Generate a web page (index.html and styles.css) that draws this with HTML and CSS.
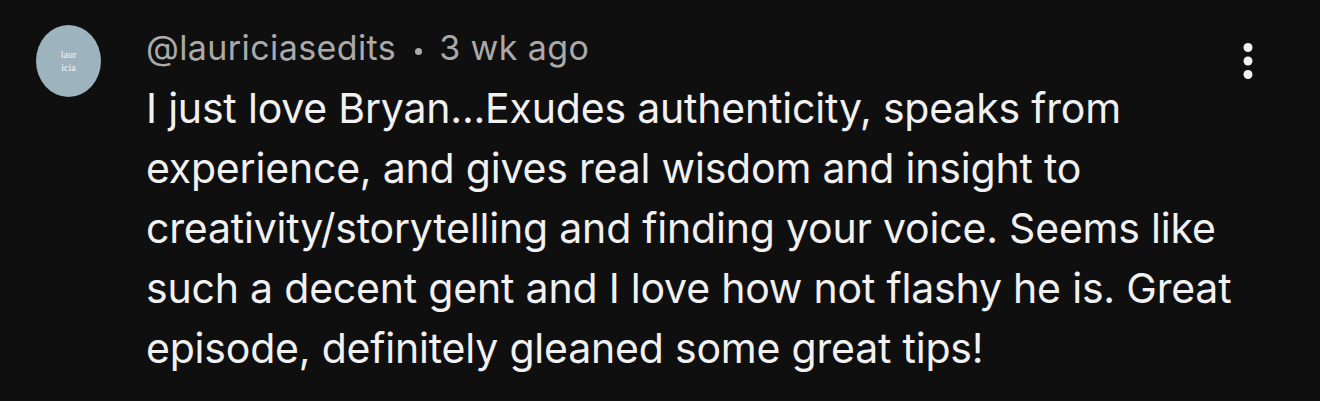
FILE: index.html
```html
<!DOCTYPE html>
<html>
<head>
<meta charset="utf-8">
<link rel="stylesheet" href="styles.css">
</head>
<body>
<div class="comment">
  <div class="avatar"><span>laur<br>icia</span></div>
  <div class="content">
    <div class="meta">@lauriciasedits<span class="dot"></span>3 wk ago</div>
    <p class="text">I just love Bryan...Exudes authenticity, speaks from<br>experience, and gives real wisdom and insight to<br>creativity/storytelling and finding your voice. Seems like<br>such a decent gent and I love how not flashy he is. Great<br>episode, definitely gleaned some great tips!</p>
  </div>
  <button class="menu" aria-label="More">
    <svg width="12" height="40" viewBox="0 0 12 40"><circle cx="6" cy="6.5" r="4.5" fill="#f1f1f1"/><circle cx="6" cy="20" r="4.5" fill="#f1f1f1"/><circle cx="6" cy="33.5" r="4.5" fill="#f1f1f1"/></svg>
  </button>
</div>
</body>
</html>
```
FILE: styles.css
```css
html, body {
  margin: 0;
  padding: 0;
  background: #0f0f0f;
}
body {
  width: 1320px;
  height: 401px;
  overflow: hidden;
  font-family: Inter, "Noto Sans", sans-serif;
}
.comment {
  display: flex;
  align-items: flex-start;
  padding: 25px 0 0 36px;
}
.avatar {
  flex: none;
  width: 65px;
  height: 72px;
  border-radius: 50%;
  background: #9db3be;
  display: flex;
  align-items: center;
  justify-content: center;
  margin-right: 45px;
}
.avatar span {
  font-family: "Liberation Serif", serif;
  font-size: 10px;
  line-height: 13px;
  color: #f4f6f7;
  text-align: center;
}
.content {
  flex: 1;
  padding-top: 3px;
}
.meta {
  color: #aaaaaa;
  font-size: 34px;
  line-height: 40px;
  letter-spacing: 0.4px;
}
.dot {
  display: inline-block;
  width: 7px;
  height: 7px;
  border-radius: 50%;
  background: #aaaaaa;
  margin: 0 17px 0 19px;
  vertical-align: 5px;
}
.text {
  margin: 10px 0 0 0;
  color: #f1f1f1;
  font-size: 41px;
  line-height: 60px;
  letter-spacing: -0.2px;
}
.menu {
  flex: none;
  background: none;
  border: 0;
  padding: 0;
  margin: 16px 66px 0 0;
  width: 12px;
  height: 40px;
}
.menu svg { display: block; }
```
